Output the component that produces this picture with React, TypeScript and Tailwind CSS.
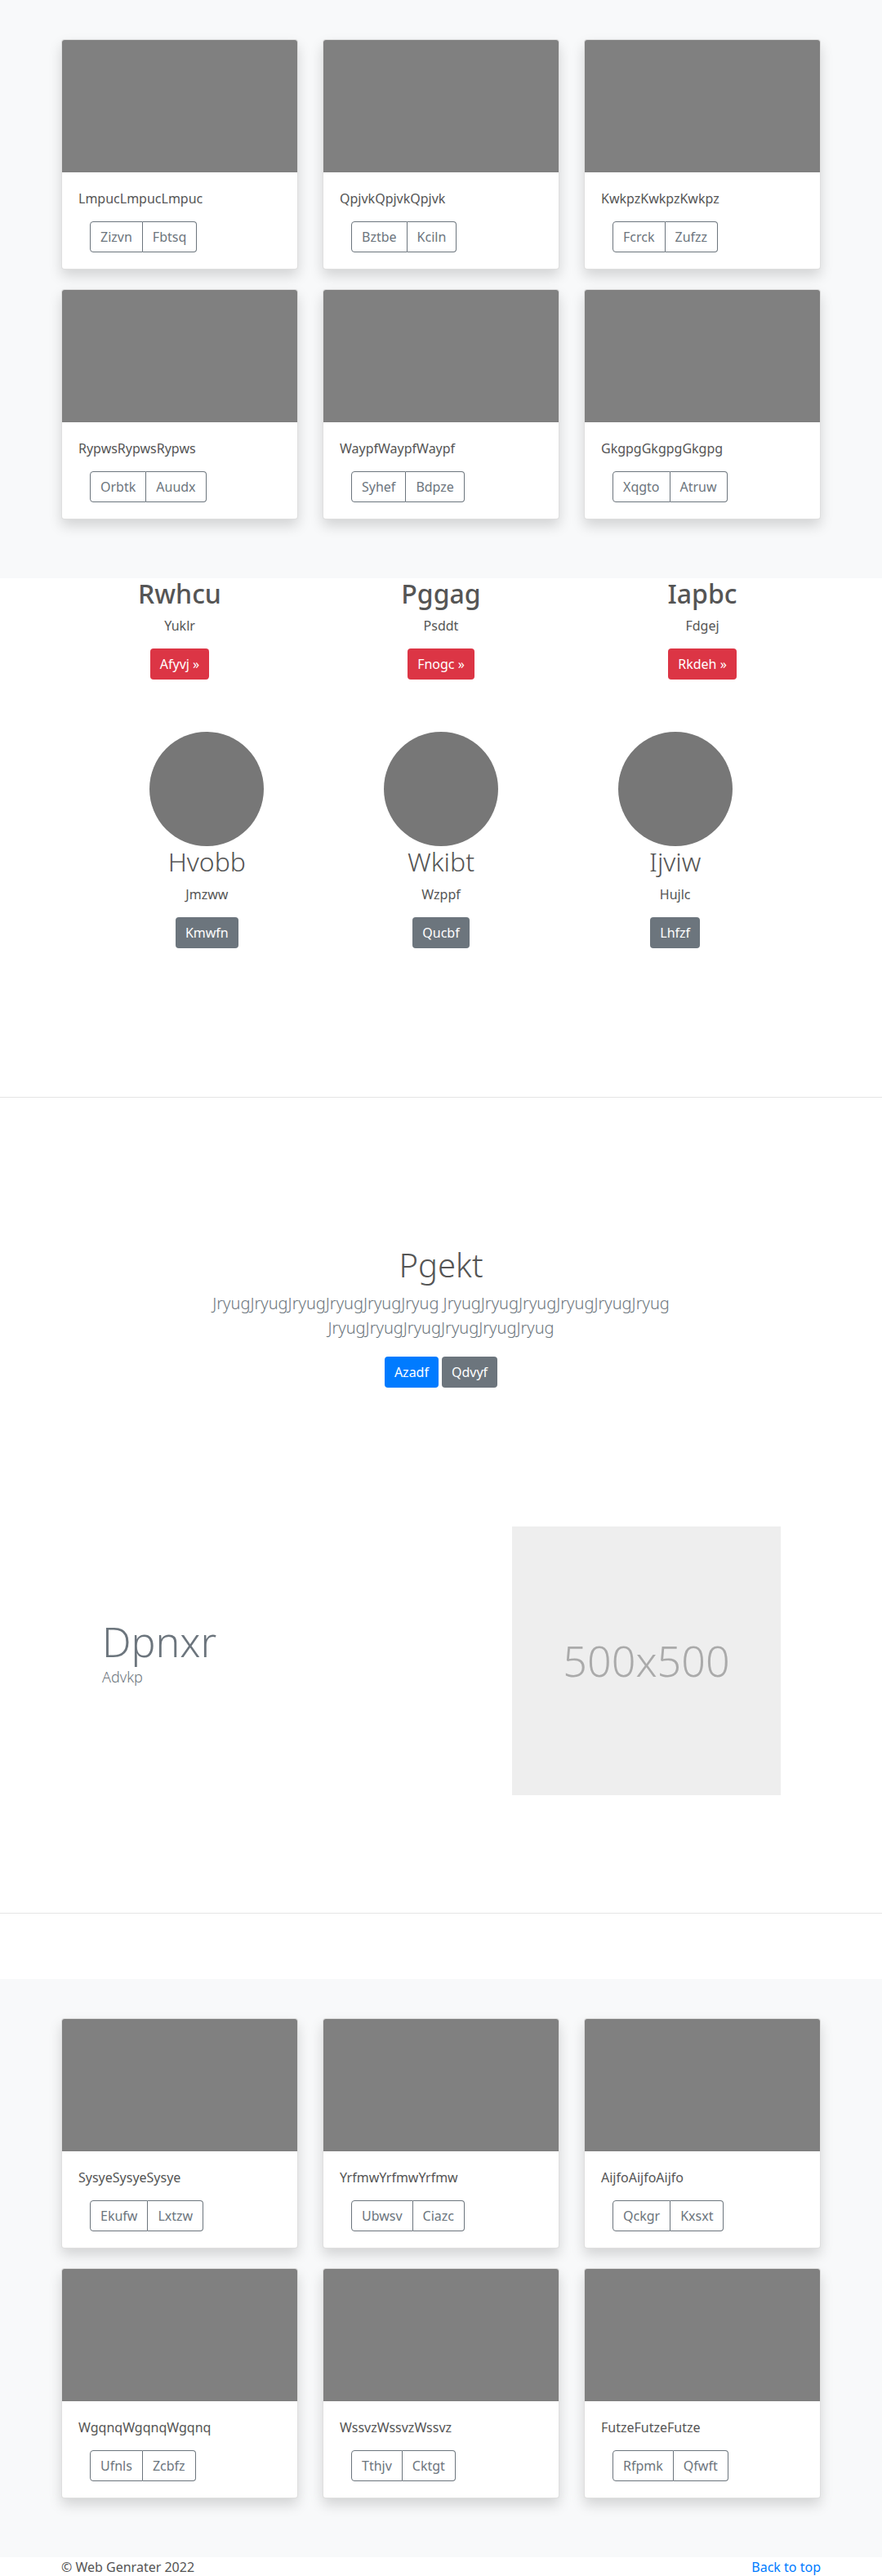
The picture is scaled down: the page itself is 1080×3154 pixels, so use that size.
import React from "react";

type CardData = { t: string; a: string; b: string };

const cardsTop: CardData[] = [
  { t: "LmpucLmpucLmpuc", a: "Zizvn", b: "Fbtsq" },
  { t: "QpjvkQpjvkQpjvk", a: "Bztbe", b: "Kciln" },
  { t: "KwkpzKwkpzKwkpz", a: "Fcrck", b: "Zufzz" },
  { t: "RypwsRypwsRypws", a: "Orbtk", b: "Auudx" },
  { t: "WaypfWaypfWaypf", a: "Syhef", b: "Bdpze" },
  { t: "GkgpgGkgpgGkgpg", a: "Xqgto", b: "Atruw" },
];

const cardsBottom: CardData[] = [
  { t: "SysyeSysyeSysye", a: "Ekufw", b: "Lxtzw" },
  { t: "YrfmwYrfmwYrfmw", a: "Ubwsv", b: "Ciazc" },
  { t: "AijfoAijfoAijfo", a: "Qckgr", b: "Kxsxt" },
  { t: "WgqnqWgqnqWgqnq", a: "Ufnls", b: "Zcbfz" },
  { t: "WssvzWssvzWssvz", a: "Tthjv", b: "Cktgt" },
  { t: "FutzeFutzeFutze", a: "Rfpmk", b: "Qfwft" },
];

const marketingTop = [
  { h: "Rwhcu", p: "Yuklr", b: "Afyvj »" },
  { h: "Pggag", p: "Psddt", b: "Fnogc »" },
  { h: "Iapbc", p: "Fdgej", b: "Rkdeh »" },
];

const marketingBottom = [
  { h: "Hvobb", p: "Jmzww", b: "Kmwfn" },
  { h: "Wkibt", p: "Wzppf", b: "Qucbf" },
  { h: "Ijviw", p: "Hujlc", b: "Lhfzf" },
];

function Card({ t, a, b }: CardData) {
  return (
    <div className="mb-6 overflow-hidden rounded-[4px] border border-[rgba(0,0,0,0.125)] bg-white shadow-[0_8px_16px_rgba(0,0,0,0.15)]">
      <div className="h-[162px] bg-[#808080]" />
      <div className="p-5">
        <p className="mb-4 text-base leading-6 text-[#555]">{t}</p>
        <div className="ml-[14px] inline-flex">
          <span className="flex h-[38px] items-center rounded-l-[4px] border border-[#6c757d] px-3 text-base text-[#6c757d]">
            {a}
          </span>
          <span className="flex h-[38px] items-center rounded-r-[4px] border border-l-0 border-[#6c757d] px-3 text-base text-[#6c757d]">
            {b}
          </span>
        </div>
      </div>
    </div>
  );
}

function CardSection({ cards }: { cards: CardData[] }) {
  return (
    <section className="bg-[#f8f9fa] py-12">
      <div className="mx-auto grid w-[960px] grid-cols-3 gap-x-[30px] px-[15px]">
        {cards.map((c) => (
          <Card key={c.t} {...c} />
        ))}
      </div>
    </section>
  );
}

export default function App() {
  return (
    <div className="bg-white font-['Noto_Sans','Open_Sans',sans-serif] text-[#555]">
      <CardSection cards={cardsTop} />

      <section className="pb-[182px]">
        <div className="mx-auto grid w-[960px] grid-cols-3 text-center">
          {marketingTop.map((m) => (
            <div key={m.h} className="flex flex-col items-center">
              <h2 className="mb-2 text-[32px] font-medium leading-[1.2] text-[#555]">{m.h}</h2>
              <p className="mb-4 text-base leading-6 text-[#555]">{m.p}</p>
              <span className="flex h-[38px] items-center rounded-[4px] bg-[#dc3545] px-3 text-base text-white">
                {m.b}
              </span>
            </div>
          ))}
        </div>
        <div className="mx-auto mt-16 grid w-[860px] grid-cols-3 text-center">
          {marketingBottom.map((m) => (
            <div key={m.h} className="flex flex-col items-center">
              <div className="h-[140px] w-[140px] rounded-full bg-[#777]" />
              <h2 className="mb-2 text-[32px] font-light leading-[1.2] text-[#555]">{m.h}</h2>
              <p className="mb-4 text-base leading-6 text-[#555]">{m.p}</p>
              <span className="flex h-[38px] items-center rounded-[4px] bg-[#6c757d] px-3 text-base text-white">
                {m.b}
              </span>
            </div>
          ))}
        </div>
      </section>

      <section className="border-t border-[#e5e5e5] pt-[181px] text-center">
        <div className="mx-auto w-[640px]">
          <h1 className="mb-2 text-[40px] font-light leading-[1.2] text-[#555]">Pgekt</h1>
          <p className="mb-5 text-[20px] font-light leading-[30px] text-[#6c757d]">
            JryugJryugJryugJryugJryugJryug JryugJryugJryugJryugJryugJryug JryugJryugJryugJryugJryugJryug
          </p>
          <div className="flex justify-center gap-1">
            <span className="flex h-[38px] items-center rounded-[4px] bg-[#007bff] px-3 text-base text-white">Azadf</span>
            <span className="flex h-[38px] items-center rounded-[4px] bg-[#6c757d] px-3 text-base text-white">Qdvyf</span>
          </div>
        </div>
      </section>

      <section className="border-b border-[#e5e5e5] pb-[144px] pt-[170px]">
        <div className="mx-auto flex w-[960px] items-center">
          <div className="mb-[20px] w-1/2 pl-[65px]">
            <h1 className="text-[50px] font-light leading-[1.2] text-[#6c757d]">Dpnxr</h1>
            <p className="text-[18px] font-light leading-[27px] text-[#6c757d]">Advkp</p>
          </div>
          <div className="w-1/2 pl-[87px]">
            <div className="flex h-[329px] w-[329px] items-center justify-center bg-[#eeeeee] text-[52px] font-light text-[#aaaaaa]">
              500x500
            </div>
          </div>
        </div>
      </section>

      <div className="mt-[80px]">
        <CardSection cards={cardsBottom} />
      </div>

      <footer className="bg-white">
        <div className="mx-auto flex w-[960px] justify-between px-[15px] text-base leading-6">
          <p className="text-[#555]">© Web Genrater 2022</p>
          <a className="text-[#007bff]" href="#">
            Back to top
          </a>
        </div>
      </footer>
    </div>
  );
}
